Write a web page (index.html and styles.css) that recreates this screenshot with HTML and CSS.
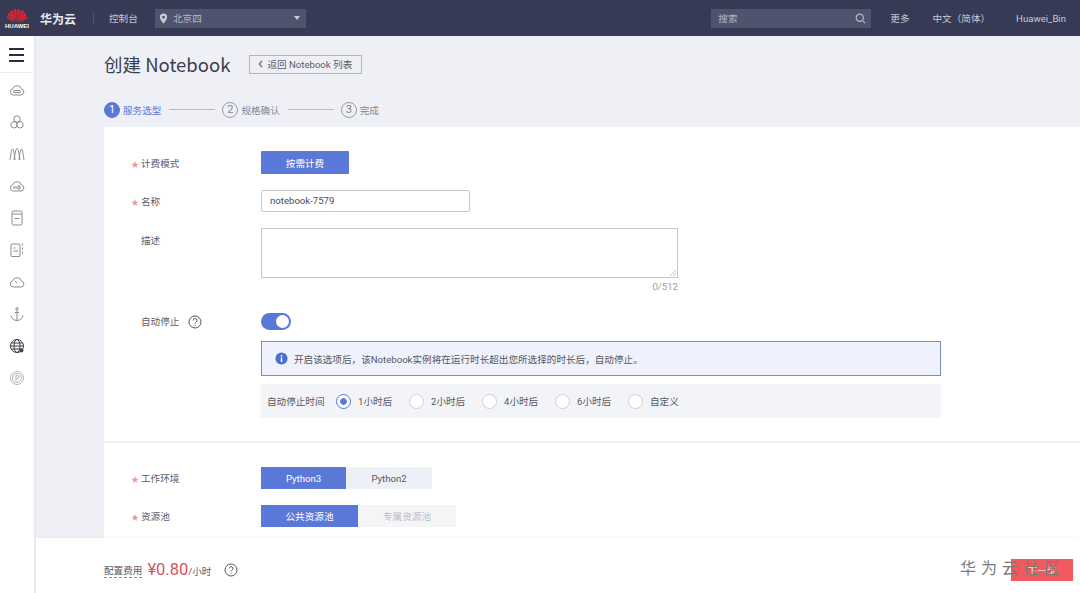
FILE: index.html
```html
<!DOCTYPE html>
<html lang="zh">
<head>
<meta charset="utf-8">
<title>创建 Notebook</title>
<link rel="stylesheet" href="styles.css">
</head>
<body>
<header class="topbar">
  <div class="brand">
    <svg class="logo-mark" viewBox="0 0 24 14" width="24" height="15" aria-hidden="true">
      <g fill="#e0262c">
        <path d="M11.400 14 8.600 1.500C9.600.6 10.800.3 11.200.6c.5 1.400.6 8 .2 13.400z"/>
        <path d="M12.600 14 15.400 1.500C14.400.6 13.200.3 12.800.6c-.5 1.400-.6 8-.2 13.400z"/>
        <path d="M10.600 14 4.900 3.400C5.600 2.500 6.700 1.800 7.500 1.700c1.200 3 2.600 8 3.100 12.300z"/>
        <path d="M13.400 14 19.100 3.400c-.7-.9-1.800-1.600-2.600-1.700-1.200 3-2.600 8-3.100 12.300z"/>
        <path d="M9.800 14 2.600 6.400C3 5.400 3.600 4.700 4.300 4.300c2 2.500 4.300 6.300 5.500 9.700z"/>
        <path d="M14.200 14l7.200-7.600c-.4-1-1-1.700-1.700-2.100-2 2.500-4.300 6.300-5.500 9.700z"/>
        <path d="M9 14 1.500 9.600c.1-.8.4-1.500.8-2 2.300 1.800 5 4.200 6.700 6.400z"/>
        <path d="M15 14l7.500-4.400c-.1-.8-.4-1.500-.8-2-2.300 1.800-5 4.200-6.700 6.400z"/>
      </g>
    </svg>
    <span class="logo-word">HUAWEI</span>
  </div>
  <span class="cloud-name">华为云</span>
  <span class="top-sep"></span>
  <span class="console">控制台</span>
  <div class="region">
    <svg viewBox="0 0 10 12" width="9" height="11" aria-hidden="true"><path fill="#c9cbd6" fill-rule="evenodd" d="M5 .5a4 4 0 0 1 4 4c0 2.600-4 7-4 7s-4-4.400-4-7a4 4 0 0 1 4-4zm0 2.400a1.600 1.600 0 1 0 0 3.200 1.600 1.600 0 0 0 0-3.200z"/></svg>
    <span class="region-name">北京四</span>
    <span class="caret"></span>
  </div>
  <div class="top-right">
    <div class="search">
      <span>搜索</span>
      <svg viewBox="0 0 12 12" width="11" height="11" aria-hidden="true"><circle cx="5.200" cy="5.200" r="3.900" fill="none" stroke="#b9bbc9" stroke-width="1.300"/><path d="M8 8l3 3" stroke="#b9bbc9" stroke-width="1.300"/></svg>
    </div>
    <span class="top-link more">更多</span>
    <span class="top-link lang">中文（简体）</span>
    <span class="top-link user">Huawei_Bin</span>
  </div>
</header>

<div class="shell">
  <nav class="sidenav">
    <div class="burger"><span></span><span></span><span></span></div>
    <ul class="nav-icons">
      <li><svg viewBox="0 0 16 16" aria-hidden="true"><path d="M4.500 13h7.500a3 3 0 0 0 .6-5.900 4.700 4.700 0 0 0-9-.2 3.100 3.100 0 0 0 .9 6.100z"/><rect x="5" y="8.500" width="6" height="2"/></svg></li>
      <li><svg viewBox="0 0 16 16" aria-hidden="true"><circle cx="8" cy="5" r="3.200"/><circle cx="5" cy="10.800" r="3.200"/><circle cx="11" cy="10.800" r="3.200"/></svg></li>
      <li><svg viewBox="0 0 16 16" aria-hidden="true"><path d="M1 14C2 8 2.300 3 3.500 3S5.500 9 6 14M5 14C5.800 8 6.800 2.500 8 2.500S10.200 8 11 14M10 14c.5-5 1.300-11 2.500-11S14 8 15 14"/></svg></li>
      <li><svg viewBox="0 0 16 16" aria-hidden="true"><path d="M4.500 13h7.500a3 3 0 0 0 .6-5.900 4.700 4.700 0 0 0-9-.2 3.100 3.100 0 0 0 .9 6.100z"/><path d="M5 8v3M7 8v3M9 8h2v3H9z"/></svg></li>
      <li><svg viewBox="0 0 16 16" aria-hidden="true"><rect x="3" y="1" width="10" height="14" rx="1.500"/><path d="M5.500 8.500h5M3 4h10"/></svg></li>
      <li><svg viewBox="0 0 16 16" aria-hidden="true"><rect x="2" y="2" width="9" height="12.500" rx="1"/><path d="M13.500 1.500v2M13.500 5.500v2M13.500 9.500v2M4.500 9h4.500M4.500 6h2"/></svg></li>
      <li><svg viewBox="0 0 16 16" aria-hidden="true"><path d="M4.500 13h7.500a3 3 0 0 0 .6-5.900 4.700 4.700 0 0 0-9-.2 3.100 3.100 0 0 0 .9 6.100z"/><path d="M6 7.500l2 1"/></svg></li>
      <li><svg viewBox="0 0 16 16" aria-hidden="true"><circle cx="8" cy="2.800" r="1.200"/><path d="M8 4v10.500M5.800 6.500h4.400M2 9.500c.5 3 3 5 6 5s5.500-2 6-5"/></svg></li>
      <li class="dark"><svg viewBox="0 0 16 16" aria-hidden="true"><circle cx="8" cy="8" r="6.500"/><ellipse cx="8" cy="8" rx="3" ry="6.500"/><path d="M1.500 8h13M2.500 5h11M2.500 11h11"/><circle class="badge" cx="12.500" cy="12.500" r="1.500"/></svg></li>
      <li class="faint"><svg viewBox="0 0 16 16" aria-hidden="true"><circle cx="8" cy="8" r="6.500"/><circle cx="8" cy="8" r="4.500"/><path d="M7 11V5.500h1.500a1.500 1.500 0 0 1 0 3H7"/></svg></li>
    </ul>
  </nav>

  <div class="workspace">
    <main class="content">
      <div class="page-head">
        <h1>创建 Notebook</h1>
        <button class="back-btn"><svg viewBox="0 0 6 10" width="5" height="8" aria-hidden="true"><path d="M5 1 1.500 5 5 9" fill="none" stroke="#4b4e60" stroke-width="1.400"/></svg>返回 Notebook 列表</button>
      </div>
      <ol class="steps">
        <li class="step active"><span class="num">1</span><span>服务选型</span></li>
        <li class="step-line"></li>
        <li class="step"><span class="num">2</span><span>规格确认</span></li>
        <li class="step-line"></li>
        <li class="step"><span class="num">3</span><span>完成</span></li>
      </ol>

      <section class="panel">
        <div class="form-top">
          <div class="row r-billing">
            <label class="lbl req">计费模式</label>
            <button class="primary-btn">按需计费</button>
          </div>
          <div class="row r-name">
            <label class="lbl req">名称</label>
            <div class="text-input">notebook-7579</div>
          </div>
          <div class="row r-desc">
            <label class="lbl">描述</label>
            <div class="desc-wrap">
              <div class="textarea"><svg class="grip" viewBox="0 0 6 6" width="6" height="6" aria-hidden="true"><path d="M0 6l6-6M3 6l3-3" stroke="#aaa" stroke-width=".7"/></svg></div>
              <div class="counter">0/512</div>
            </div>
          </div>
          <div class="row r-toggle">
            <label class="lbl">自动停止<svg class="help" viewBox="0 0 14 14" aria-hidden="true"><circle cx="7" cy="7" r="6"/><path d="M5.200 5.500a1.900 1.900 0 1 1 2.700 1.700c-.6.300-.9.700-.9 1.300"/><path d="M7 9.800v1"/></svg></label>
            <div class="toggle"><span></span></div>
          </div>
          <div class="info-box">
            <svg viewBox="0 0 14 14" width="13" height="13" aria-hidden="true"><circle cx="7" cy="7" r="6.500" fill="#4a70cf"/><rect x="6.200" y="6" width="1.600" height="4.800" fill="#fff"/><rect x="6.200" y="3.200" width="1.600" height="1.700" fill="#fff"/></svg>
            <span>开启该选项后，该Notebook实例将在运行时长超出您所选择的时长后，自动停止。</span>
          </div>
          <div class="stop-bar">
            <span class="stop-label">自动停止时间</span>
            <span class="radio on">1小时后</span>
            <span class="radio">2小时后</span>
            <span class="radio">4小时后</span>
            <span class="radio">6小时后</span>
            <span class="radio">自定义</span>
          </div>
        </div>
        <div class="form-bottom">
          <div class="row r-env">
            <label class="lbl req">工作环境</label>
            <div class="seg">
              <span class="seg-item sel w-85">Python3</span>
              <span class="seg-item alt w-86">Python2</span>
            </div>
          </div>
          <div class="row r-pool">
            <label class="lbl req">资源池</label>
            <div class="seg">
              <span class="seg-item sel w-97">公共资源池</span>
              <span class="seg-item off w-98">专属资源池</span>
            </div>
          </div>
        </div>
      </section>
    </main>

    <footer class="footer">
      <span class="fee-label">配置费用</span>
      <span class="price">¥0.80</span><span class="unit">/小时</span>
      <svg class="help fee-help" viewBox="0 0 14 14" aria-hidden="true"><circle cx="7" cy="7" r="6"/><path d="M5.200 5.500a1.900 1.900 0 1 1 2.700 1.700c-.6.300-.9.700-.9 1.300"/><path d="M7 9.800v1"/></svg>
      <div class="next-wrap">
        <span class="next-btn">下一步</span>
        <span class="watermark">华为云社区</span>
      </div>
    </footer>
  </div>
</div>
</body>
</html>
```

FILE: styles.css
```css
* { box-sizing: border-box; }
html, body { margin: 0; height: 100%; overflow: hidden; }
body {
  width: 1080px; height: 593px;
  display: flex; flex-direction: column;
  font-family: "Roboto", "Noto Sans CJK SC", sans-serif;
  font-size: 9.6px; color: #5a5c68; background: #fff;
}

/* top bar */
.topbar {
  height: 36px; flex: none; display: flex; align-items: center;
  background: #373a55; color: #c8cad6;
}
.brand { width: 34px; display: flex; flex-direction: column; align-items: center; }
.logo-mark { display: block; margin-top: 1px; }
.logo-word { font-size: 6px; line-height: 7px; color: #fff; font-weight: 700; font-family: "Liberation Sans", sans-serif; }
.cloud-name { margin-left: 6px; font-size: 12px; font-weight: 700; color: #e9eaf0; width: 36px; }
.top-sep { width: 1px; height: 11px; background: #50536c; margin-left: 17px; }
.console { margin-left: 15px; color: #c3c5d2; width: 31px; }
.region {
  margin-left: 15px; width: 151px; height: 19px; background: #50536d;
  display: flex; align-items: center; padding: 0 6px 0 4px; color: #b5b7c6;
}
.region-name { margin-left: 5px; flex: 1; }
.caret { width: 0; height: 0; border: 3px solid transparent; border-top: 4px solid #c9cbd6; border-bottom: 0; }
.top-right { margin-left: auto; display: flex; align-items: center; }
.search {
  width: 160px; height: 19px; background: #50536d; display: flex; align-items: center;
  justify-content: space-between; padding: 0 5px 0 7px; color: #b5b7c6;
}
.top-link { color: #c8cad6; white-space: nowrap; }
.more { margin-left: 19px; }
.lang { margin-left: 23px; }
.user { margin-left: 26px; margin-right: 14px; }

/* shell */
.shell { flex: 1; min-height: 0; display: flex; }
.sidenav { width: 36px; flex: none; background: #fff; border-right: 2px solid #e8e9f1; }
.burger {
  height: 37px; margin-right: 2px; border-bottom: 1px solid #eeeef2;
  display: flex; flex-direction: column; align-items: center; justify-content: center; gap: 4px;
  padding-top: 1px;
}
.burger span { width: 15px; height: 2px; background: #2b2d3a; }
.nav-icons { list-style: none; margin: 0; padding: 1px 0 0; width: 33px; }
.nav-icons li { height: 32px; display: flex; align-items: center; justify-content: center; }
.nav-icons svg { width: 16px; height: 16px; fill: none; stroke: #8a8c94; stroke-width: 1; }
.nav-icons .dark svg { stroke: #3a3c48; }
.nav-icons .dark .badge { fill: #3a3c48; }
.nav-icons .faint svg { stroke: #b4b5bb; }

.workspace { flex: 1; min-width: 0; display: flex; flex-direction: column; }
.content { flex: 1; min-height: 0; overflow: hidden; background: #eff0f6; padding: 0 0 0 68px; }

.page-head { height: 56px; display: flex; align-items: center; }
h1 { margin: 0; font-size: 18.5px; line-height: 28px; font-weight: 400; color: #3b3d4d; font-family: "Noto Sans CJK SC", sans-serif; padding-bottom: 1px; }
.back-btn {
  margin-left: 19px; width: 113px; height: 19px; padding: 0 0 0 8px; border: 1px solid #b4b5bd; background: transparent;
  display: flex; align-items: center; gap: 4px; font: inherit; color: #5a5c68; white-space: nowrap;
}

.steps { list-style: none; margin: 0; padding: 9px 0 0; height: 35px; display: flex; align-items: flex-start; }
.step { display: flex; align-items: center; height: 17px; gap: 3px; color: #85868f; }
.step .num {
  width: 16px; height: 16px; border-radius: 50%; border: 1px solid #9a9ba3; display: flex; align-items: center; justify-content: center;
  font-size: 11px; color: #85868f;
}
.step.active { color: #5a78d8; }
.step.active .num { background: #5a78d8; border-color: #5a78d8; color: #fff; }
.step-line { width: 46px; height: 1px; background: #b9bac2; margin: 8px 7px 0 8px; }

.panel { background: #fff; height: 600px; }
.form-top { padding: 24px 0 0; border-bottom: 2px solid #eff0f4; height: 316px; }
.form-bottom { padding-top: 24px; }
.row { display: flex; align-items: flex-start; }
.lbl { width: 157px; flex: none; padding-left: 37px; position: relative; line-height: 23px; color: #5a5c68; display: flex; align-items: center; }
.lbl.req::before { content: "★"; position: absolute; left: 27px; top: 1px; color: #e8989e; font-size: 8px; }
.r-billing .lbl, .r-desc .lbl { height: 23px; line-height: 25px; align-items: flex-start; }

.primary-btn { width: 88px; height: 23px; background: #5a78d8; border: 0; border-radius: 1px; color: #fff; font: inherit; padding: 0; }
.r-name { margin-top: 16px; }
.text-input { width: 209px; height: 22px; border: 1px solid #c6c6cc; border-radius: 2px; padding: 0 8px; line-height: 20px; color: #4a4c58; }
.r-desc { margin-top: 15px; }
.desc-wrap { width: 417px; }
.textarea { height: 50px; border: 1px solid #c6c6cc; display: flex; align-items: flex-end; justify-content: flex-end; padding: 1px; }
.grip { display: block; }
.counter { text-align: right; line-height: 17px; color: #9a9ba3; }
.r-toggle { margin-top: 18px; }
.r-toggle .lbl { line-height: 17px; height: 17px; }
.help { width: 14px; height: 14px; fill: none; stroke: #55575f; stroke-width: 1; margin-left: 9px; flex: none; }
.toggle { width: 30px; height: 17px; border-radius: 9px; background: #5a78d8; padding: 2px; display: flex; justify-content: flex-end; }
.toggle span { width: 13px; height: 13px; border-radius: 50%; background: #fff; }

.info-box {
  margin: 11px 0 0 157px; width: 680px; height: 35px; background: #eff2fc; border: 1px solid #7d8cc4;
  display: flex; align-items: center; gap: 6px; padding-left: 13px; color: #55575f;
}
.stop-bar {
  margin: 8px 0 0 157px; width: 680px; height: 34px; background: #f3f4f7; display: flex; align-items: center; padding-left: 6px;
}
.stop-label { width: 69px; color: #55575f; }
.radio { display: flex; align-items: center; width: 73px; color: #55575f; }
.radio::before {
  content: ""; width: 13px; height: 13px; margin-right: 7px; border-radius: 50%; border: 1px solid #cfd0d6; background: #fff; flex: none;
}
.radio.on::before { border-color: #5a78d8; background: radial-gradient(circle, #5a78d8 0 3px, #fff 3.6px); }

.r-pool { margin-top: 15px; }
.seg { display: flex; height: 22px; }
.seg-item { display: flex; align-items: center; justify-content: center; height: 22px; }
.w-85 { width: 85px; } .w-86 { width: 86px; } .w-97 { width: 97px; } .w-98 { width: 98px; }
.seg-item.sel { background: #5a78d8; color: #fff; }
.seg-item.alt { background: #eef0f8; color: #55575f; }
.seg-item.off { background: #f5f5f7; color: #bcbdc4; }

.footer {
  height: 55px; flex: none; background: #fff; display: flex; align-items: center; padding: 8px 7px 0 68px;
  box-shadow: 0 -1px 2px rgba(0,0,0,.04); position: relative;
}
.fee-label { border-bottom: 1px dashed #8a8b93; line-height: 13px; margin-top: 3px; }
.price { margin-left: 5px; font-size: 16.5px; color: #d4535c; }
.unit { margin-top: 3px; color: #5a5c68; }
.fee-help { margin-left: 13px; }
.next-wrap { margin-left: auto; width: 113px; height: 22px; position: relative; display: flex; justify-content: flex-end; }
.next-btn { width: 62px; height: 22px; background: #f05a5e; color: #f6dada; display: flex; align-items: center; justify-content: center; }
.watermark { position: absolute; left: 0; top: 0; line-height: 20px; font-size: 16px; letter-spacing: 5px; color: #7a7a7a; white-space: nowrap; }
```
